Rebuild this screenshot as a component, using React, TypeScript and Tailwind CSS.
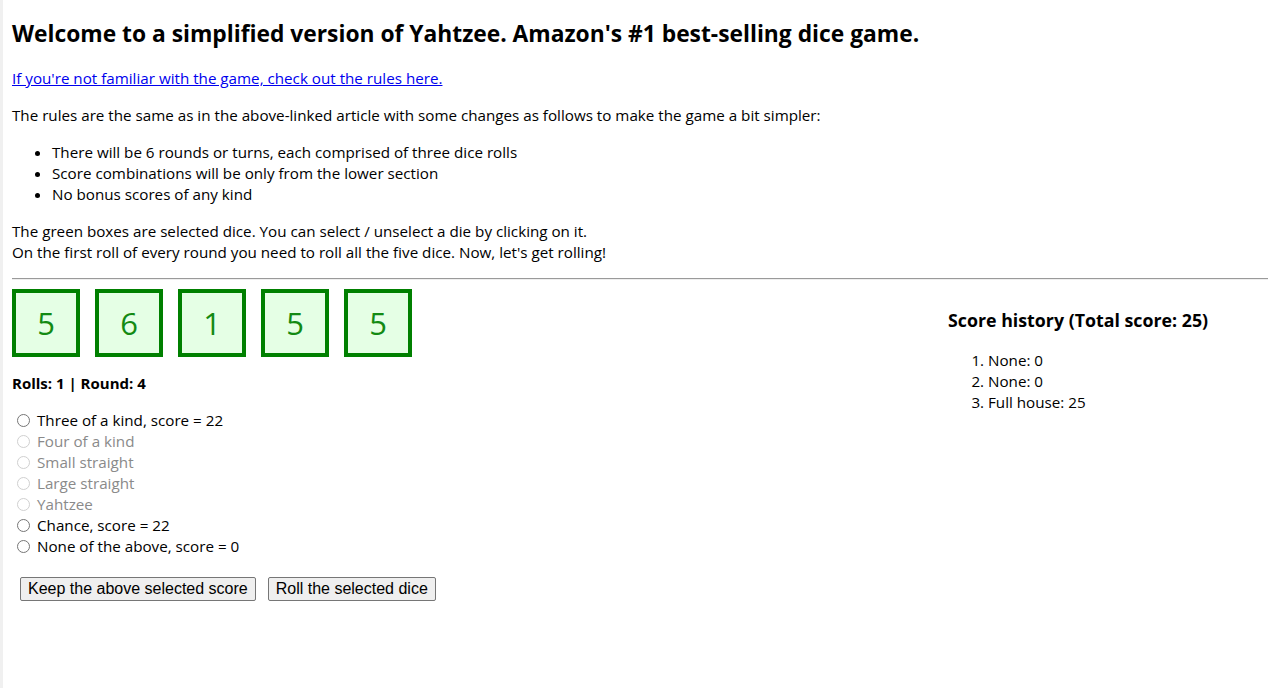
import React from 'react';

const DICE = [5, 6, 1, 5, 5];

const OPTIONS = [
  { label: 'Three of a kind, score = 22', enabled: true },
  { label: 'Four of a kind', enabled: false },
  { label: 'Small straight', enabled: false },
  { label: 'Large straight', enabled: false },
  { label: 'Yahtzee', enabled: false },
  { label: 'Chance, score = 22', enabled: true },
  { label: 'None of the above, score = 0', enabled: true },
];

const HISTORY = ['None: 0', 'None: 0', 'Full house: 25'];

function Radio({ enabled }: { enabled: boolean }) {
  return (
    <span
      className={`ml-[5px] mr-[7px] inline-block h-[13px] w-[13px] shrink-0 rounded-full border bg-white ${
        enabled ? 'border-[#767676]' : 'border-[#d0d0d0]'
      }`}
    />
  );
}

export default function App() {
  return (
    <div
      className="min-h-screen border-l-[3px] border-[#f0f0f0] bg-white pl-[9px] text-[15.2px] leading-[21px] text-black"
      style={{ fontFamily: '"Open Sans", "Noto Sans", sans-serif' }}
    >
      <h2 className="pt-[18px] text-[22.8px] font-bold leading-[32px]">
        Welcome to a simplified version of Yahtzee. Amazon's #1 best-selling dice game.
      </h2>

      <a href="#" className="mt-[18px] block w-fit text-[#0000ee] underline">
        If you're not familiar with the game, check out the rules here.
      </a>

      <p className="mt-[16px]">
        The rules are the same as in the above-linked article with some changes as follows to make the game a bit simpler:
      </p>

      <ul className="mt-[16px] list-disc pl-[40px]">
        <li>There will be 6 rounds or turns, each comprised of three dice rolls</li>
        <li>Score combinations will be only from the lower section</li>
        <li>No bonus scores of any kind</li>
      </ul>

      <p className="mt-[16px]">
        The green boxes are selected dice. You can select / unselect a die by clicking on it.
        <br />
        On the first roll of every round you need to roll all the five dice. Now, let's get rolling!
      </p>

      <hr className="mt-[15px] h-[2px] border-t border-b border-t-[#9a9a9a] border-b-[#eeeeee]" />

      <div className="flex">
        {/* Left: dice + scoring */}
        <div className="w-[936px] shrink-0">
          <div className="mt-[9px] flex gap-[15px]">
            {DICE.map((d, i) => (
              <div
                key={i}
                className="flex h-[68px] w-[68px] items-center justify-center border-4 border-[#008000] bg-[#e5ffe5] text-[31px] text-[#138a13]"
              >
                {d}
              </div>
            ))}
          </div>

          <div className="mt-[16px] text-[15px] font-bold leading-[20px]">Rolls: 1 | Round: 4</div>

          <div className="mt-[17px]">
            {OPTIONS.map((o) => (
              <div key={o.label} className="flex h-[21px] items-center">
                <Radio enabled={o.enabled} />
                <span className={o.enabled ? 'text-black' : 'text-[#8a8a8a]'}>{o.label}</span>
              </div>
            ))}
          </div>

          <div className="mt-[20px] flex gap-[12px] pl-[8px]" style={{ fontFamily: '"Liberation Sans", Arial, sans-serif' }}>
            <button className="h-[24px] rounded-[2px] border border-[#767676] bg-[#efefef] px-[7px] text-[16px] leading-[20px] text-black">
              Keep the above selected score
            </button>
            <button className="h-[24px] rounded-[2px] border border-[#767676] bg-[#efefef] px-[7px] text-[16px] leading-[20px] text-black">
              Roll the selected dice
            </button>
          </div>
        </div>

        {/* Right: score history */}
        <div className="flex-1">
          <h3 className="mt-[28px] text-[17.8px] font-bold leading-[25px]">Score history (Total score: 25)</h3>
          <ol className="mt-[17px] list-decimal pl-[40px]">
            {HISTORY.map((h, i) => (
              <li key={i}>{h}</li>
            ))}
          </ol>
        </div>
      </div>
    </div>
  );
}
